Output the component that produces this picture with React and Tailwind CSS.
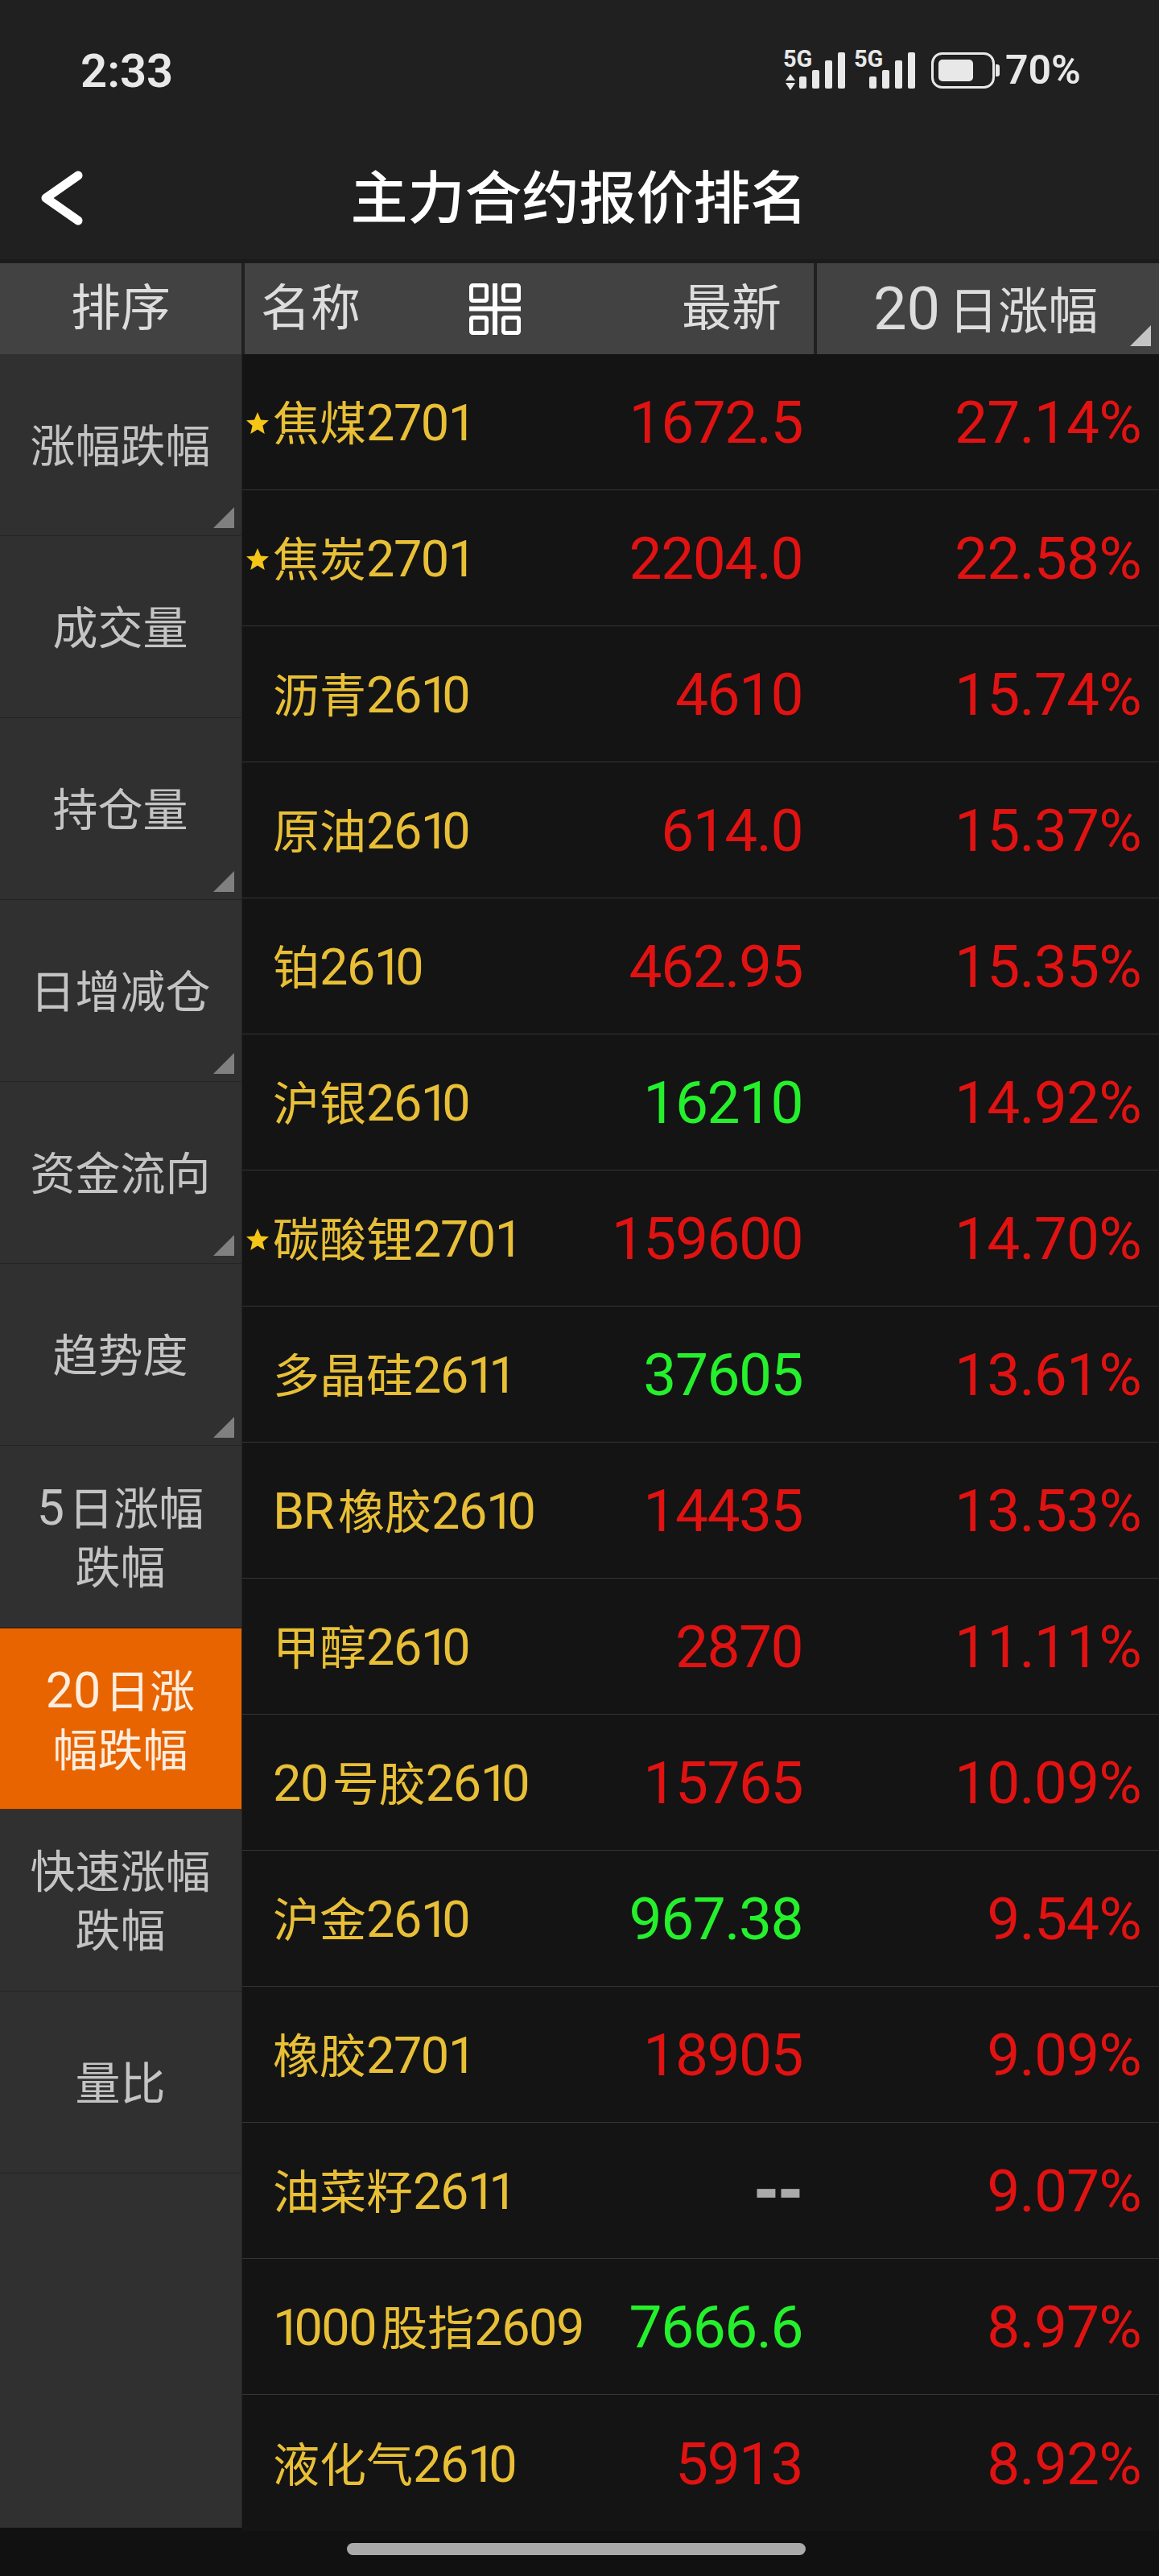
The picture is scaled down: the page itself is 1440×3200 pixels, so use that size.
import React from "react";

const SIDE = [
  { l: ["涨幅跌幅"], t: true },
  { l: ["成交量"] },
  { l: ["持仓量"], t: true },
  { l: ["日增减仓"], t: true },
  { l: ["资金流向"], t: true },
  { l: ["趋势度"], t: true },
  { l: ["5日涨幅", "跌幅"] },
  { l: ["20日涨", "幅跌幅"], a: true },
  { l: ["快速涨幅", "跌幅"] },
  { l: ["量比"] },
];

const R = "text-[#e01212]";
const G = "text-[#25f02c]";
const ROWS = [
  ["焦煤2701", "1672.5", R, "27.14%", true],
  ["焦炭2701", "2204.0", R, "22.58%", true],
  ["沥青2610", "4610", R, "15.74%"],
  ["原油2610", "614.0", R, "15.37%"],
  ["铂2610", "462.95", R, "15.35%"],
  ["沪银2610", "16210", G, "14.92%"],
  ["碳酸锂2701", "159600", R, "14.70%", true],
  ["多晶硅2611", "37605", G, "13.61%"],
  ["BR橡胶2610", "14435", R, "13.53%"],
  ["甲醇2610", "2870", R, "11.11%"],
  ["20号胶2610", "15765", R, "10.09%"],
  ["沪金2610", "967.38", G, "9.54%"],
  ["橡胶2701", "18905", R, "9.09%"],
  ["油菜籽2611", "--", "text-[#aaaaaa]", "9.07%"],
  ["1000股指2609", "7666.6", G, "8.97%"],
  ["液化气2610", "5913", R, "8.92%"],
];

function Name({ text }) {
  const parts = text.match(/[0-9A-Z]+|[^0-9A-Z]+/g);
  return (
    <span className="text-[58px] leading-none text-[#e8bf36] whitespace-nowrap">
      {parts.map((p, i) =>
        /[0-9A-Z]/.test(p) ? (
          <span key={i} className="text-[63px] mr-[6px]">
            {p.split("").map((c, j) => (
              <span key={j} className={c === "1" ? "tracking-[-9px]" : "tracking-[-1.5px]"}>{c}</span>
            ))}
          </span>
        ) : (
          <span key={i}>{p}</span>
        )
      )}
    </span>
  );
}

function SideLine({ text }) {
  const parts = text.match(/[0-9]+|[^0-9]+/g);
  return (
    <span className="whitespace-nowrap">
      {parts.map((p, i) =>
        /[0-9]/.test(p) ? (
          <span key={i} className="text-[61px] mr-[5px]">{p}</span>
        ) : (
          <span key={i}>{p}</span>
        )
      )}
    </span>
  );
}

function Star() {
  return (
    <svg viewBox="0 0 28 27" className="w-[28px] h-[27px]">
      <polygon points="14,0 18,9.5 28,10.2 20.4,16.8 22.8,27 14,21.6 5.2,27 7.6,16.8 0,10.2 10,9.5" fill="#f5c518" />
    </svg>
  );
}

function Corner({ c }) {
  return (
    <svg viewBox="0 0 26 26" className="w-[26px] h-[26px]">
      <polygon points="26,0 26,26 0,26" fill={c} />
    </svg>
  );
}

function Bars({ x }) {
  return (
    <g fill="#e8e8e8">
      <rect x={x} y="30" width="9" height="15" rx="2" />
      <rect x={x + 16} y="22" width="9" height="23" rx="2" />
      <rect x={x + 32} y="10" width="9" height="35" rx="2" />
      <rect x={x + 48} y="0" width="9" height="45" rx="2" />
    </g>
  );
}

function StatusIcons() {
  return (
    <div className="relative w-[270px] h-[50px]">
      <svg viewBox="0 0 270 50" className="w-[270px] h-[50px]">
        <polygon points="9,27 15,35 3,35" fill="#e8e8e8" />
        <polygon points="3,38 15,38 9,47" fill="#e8e8e8" />
        <Bars x={20} />
        <Bars x={107} />
        <rect x="185.5" y="1.5" width="76" height="42" rx="12" fill="none" stroke="#e8e8e8" strokeWidth="3" />
        <rect x="193" y="9" width="43" height="27" rx="5" fill="#e8e8e8" />
        <path d="M264 15 h2 a3 3 0 0 1 3 3 v9 a3 3 0 0 1 -3 3 h-2 z" fill="#e8e8e8" />
      </svg>
      <span className="absolute left-0 top-[-9px] text-[29px] leading-[34px] font-bold text-[#e8e8e8]">5G</span>
      <span className="absolute left-[88px] top-[-9px] text-[29px] leading-[34px] font-bold text-[#e8e8e8]">5G</span>
    </div>
  );
}

export default function App() {
  return (
    <div className="w-[1440px] h-[3200px] flex flex-col bg-[#111111] font-[Roboto,'Noto_Sans_CJK_SC',sans-serif] overflow-hidden">
      <header className="h-[327px] shrink-0 bg-[#202020] border-b-[5px] border-[#1b1b1b] flex flex-col">
        <div className="h-[172px] flex justify-between items-start pt-[58px] pl-[100px] pr-[97px]">
          <span className="text-[58px] leading-[60px] font-semibold text-[#e8e8e8]">2:33</span>
          <div className="flex items-start pt-[7px]">
            <StatusIcons />
            <span className="ml-[6px] text-[50px] leading-[50px] font-semibold text-[#e8e8e8] mt-[-3px]">70%</span>
          </div>
        </div>
        <div className="relative flex-1 flex justify-center">
          <svg viewBox="0 0 54 68" className="absolute left-[50px] top-[40px] w-[54px] h-[68px]" fill="none" stroke="#ffffff" strokeWidth="11" strokeLinecap="round" strokeLinejoin="round">
            <path d="M47 6 L7 34 L47 62" />
          </svg>
          <span className="text-[71px] leading-[80px] font-medium text-white mt-[35px] mr-[1px]">主力合约报价排名</span>
        </div>
      </header>

      <div className="h-[113px] shrink-0 flex bg-[#202020] gap-[4px]">
        <div className="w-[300px] bg-[#424242] flex items-center justify-center text-[62px] text-[#dddddd]">排序</div>
        <div className="w-[707px] bg-[#424242] flex items-center text-[62px] text-[#dddddd]">
          <span className="ml-[20px]">名称</span>
          <svg viewBox="0 0 64 64" className="ml-[135px] w-[64px] h-[64px]" fill="none" stroke="#ffffff" strokeWidth="5">
            <rect x="2.5" y="2.5" width="19" height="19" rx="2" />
            <rect x="42.5" y="2.5" width="19" height="19" rx="2" />
            <rect x="2.5" y="42.5" width="19" height="19" rx="2" />
            <rect x="42.5" y="42.5" width="19" height="19" rx="2" />
            <path d="M32 0 V64 M0 31.5 H64" strokeWidth="6" />
          </svg>
          <span className="ml-auto mr-[40px]">最新</span>
        </div>
        <div className="relative flex-1 bg-[#424242] flex items-center text-[#dddddd]">
          <span className="ml-[70px] whitespace-nowrap">
            <span className="text-[74px]">20</span>
            <span className="ml-[10px] text-[62px]">日涨幅</span>
          </span>
          <div className="absolute right-[10px] bottom-[10px]"><Corner c="#c4c4c4" /></div>
        </div>
      </div>

      <div className="flex h-[2704px] shrink-0">
        <aside className="w-[301px] h-[2700px] shrink-0 bg-[#303030] border-r border-[#242424] flex flex-col">
          {SIDE.map((s, i) => (
            <div
              key={i}
              className={
                s.a
                  ? "relative h-[226px] shrink-0 pt-[5px] pr-[1px] bg-[#e86400] border-y border-[#5a2a10] flex flex-col items-center justify-center text-[56px] leading-[73px] text-[#fdeee0]"
                  : "relative h-[226px] shrink-0 pt-[5px] pr-[1px] border-b border-[#242424] flex flex-col items-center justify-center text-[56px] leading-[73px] text-[#c4c4c4]"
              }
            >
              {s.l.map((t) => (
                <SideLine key={t} text={t} />
              ))}
              {s.t && (
                <div className="absolute right-[9px] bottom-[9px]"><Corner c="#808080" /></div>
              )}
            </div>
          ))}
        </aside>
        <main className="flex-1 flex flex-col bg-[#131413]">
          {ROWS.map((r, i) => (
            <div
              key={i}
              className={
                i === ROWS.length - 1
                  ? "relative h-[169px] shrink-0 pt-[3px] flex items-center"
                  : "relative h-[169px] shrink-0 pt-[3px] flex items-center border-b border-[#353535]"
              }
            >
              <div className="w-[440px] flex items-center">
                <div className="w-[38px] flex justify-end pr-[5px]">{r[4] && <Star />}</div>
                <Name text={r[0]} />
              </div>
              {r[1] === "--" ? (
                <div className={"w-[256px] text-right font-['Liberation_Sans'] text-[90px] leading-none font-bold mb-[12px] " + r[2]}>{r[1]}</div>
              ) : (
                <div className={"w-[256px] text-right text-[73px] leading-none tracking-[-1.5px] " + r[2]}>{r[1]}</div>
              )}
              <div className="flex-1 text-right text-[73px] leading-none tracking-[-0.8px] pr-[22px] text-[#e01212]">{r[3]}</div>
            </div>
          ))}
        </main>
      </div>

      <div className="flex-1 pt-[15px] pl-[431px]">
        <div className="w-[570px] h-[15px] rounded-full bg-[#aaaaaa]" />
      </div>
    </div>
  );
}
